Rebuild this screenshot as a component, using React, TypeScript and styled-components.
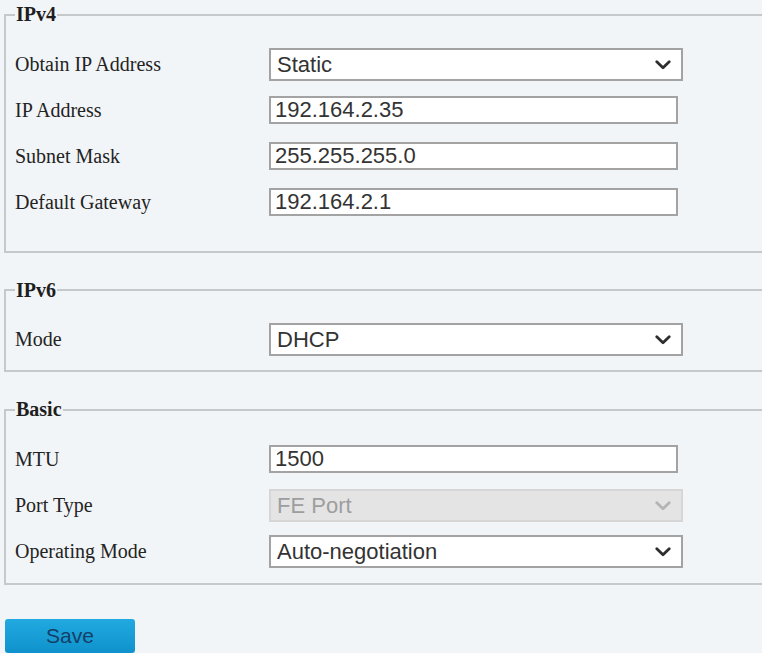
import React from "react";
import styled, { createGlobalStyle } from "styled-components";

const GlobalStyle = createGlobalStyle`
  html, body {
    margin: 0;
    padding: 0;
    background: #f2f5f8;
  }
  body {
    font-family: "Liberation Serif", "Times New Roman", serif;
    color: #222;
  }
`;

type Field =
  | { kind: "select"; label: string; value: string; disabled?: boolean }
  | { kind: "input"; label: string; value: string };

type Section = {
  title: string;
  bottom: number;
  fields: Field[];
};

const sections: Section[] = [
  {
    title: "IPv4",
    bottom: 25.5,
    fields: [
      { kind: "select", label: "Obtain IP Address", value: "Static" },
      { kind: "input", label: "IP Address", value: "192.164.2.35" },
      { kind: "input", label: "Subnet Mask", value: "255.255.255.0" },
      { kind: "input", label: "Default Gateway", value: "192.164.2.1" },
    ],
  },
  {
    title: "IPv6",
    bottom: 7.5,
    fields: [{ kind: "select", label: "Mode", value: "DHCP" }],
  },
  {
    title: "Basic",
    bottom: 8.5,
    fields: [
      { kind: "input", label: "MTU", value: "1500" },
      { kind: "select", label: "Port Type", value: "FE Port", disabled: true },
      { kind: "select", label: "Operating Mode", value: "Auto-negotiation" },
    ],
  },
];

const Chevron: React.FC<{ disabled?: boolean }> = ({ disabled }) => (
  <ChevronIcon width="16" height="10" viewBox="0 0 16 10">
    <polyline
      points="1.8,1.8 8,7.8 14.2,1.8"
      fill="none"
      stroke={disabled ? "#b4b4b4" : "#2e2e2e"}
      strokeWidth="2.8"
      strokeLinecap="round"
      strokeLinejoin="round"
    />
  </ChevronIcon>
);

export default function App() {
  return (
    <Page>
      <GlobalStyle />
      {sections.map((s) => (
        <Group key={s.title} $bottom={s.bottom}>
          <Legend>{s.title}</Legend>
          <Rows>
            {s.fields.map((f) => (
              <React.Fragment key={f.label}>
                <Label>{f.label}</Label>
                {f.kind === "select" ? (
                  <SelectWrap>
                    <Select
                      value={f.value}
                      disabled={f.disabled}
                      onChange={() => undefined}
                    >
                      <option>{f.value}</option>
                    </Select>
                    <Chevron disabled={f.disabled} />
                  </SelectWrap>
                ) : (
                  <TextInput value={f.value} readOnly />
                )}
              </React.Fragment>
            ))}
          </Rows>
        </Group>
      ))}
      <SaveButton type="button">Save</SaveButton>
    </Page>
  );
}

const Page = styled.div`
  display: flex;
  flex-direction: column;
  align-items: stretch;
  gap: 26px;
  padding: 3px 0 0 4px;
`;

const Group = styled.fieldset<{ $bottom: number }>`
  box-sizing: border-box;
  margin: 0;
  min-width: 0;
  border: 2px solid #c6c9cc;
  border-right: none;
  padding: 15px 0 ${(p) => p.$bottom}px 9px;
`;

const Legend = styled.legend`
  padding: 0 1px;
  font-size: 20px;
  line-height: 23px;
  font-weight: bold;
  color: #1e1e1e;
`;

const Rows = styled.div`
  display: grid;
  grid-template-columns: 254px 1fr;
  grid-auto-rows: 46px;
  align-items: center;
`;

const Label = styled.div`
  font-size: 20px;
  color: #232323;
  white-space: nowrap;
`;

const SelectWrap = styled.div`
  position: relative;
  width: 414px;
  height: 33px;
`;

const Select = styled.select`
  box-sizing: border-box;
  width: 100%;
  height: 100%;
  margin: 0;
  padding: 0 30px 0 6px;
  appearance: none;
  border: 2px solid #a3a3a3;
  border-radius: 0;
  background: #fff;
  font-family: "Liberation Sans", Arial, sans-serif;
  font-size: 22px;
  color: #333;
  outline: none;

  &:disabled {
    background: #e4e4e4;
    border-color: #d6d6d6;
    color: #9e9e9e;
    opacity: 1;
  }
`;

const ChevronIcon = styled.svg`
  position: absolute;
  right: 12px;
  top: 12px;
  pointer-events: none;
`;

const TextInput = styled.input`
  box-sizing: border-box;
  width: 409px;
  height: 28px;
  margin: 0;
  padding: 0 4px;
  border: 2px solid #a3a3a3;
  border-radius: 0;
  background: #fff;
  font-family: "Liberation Sans", Arial, sans-serif;
  font-size: 22px;
  color: #333;
  outline: none;
`;

const SaveButton = styled.button`
  align-self: flex-start;
  margin: 8px 0 0 1px;
  width: 130px;
  height: 34px;
  border: none;
  border-radius: 3px;
  background: linear-gradient(#22a9e0, #0f92cc);
  font-family: "Liberation Sans", Arial, sans-serif;
  font-size: 21px;
  color: #143f68;
  cursor: pointer;
`;
